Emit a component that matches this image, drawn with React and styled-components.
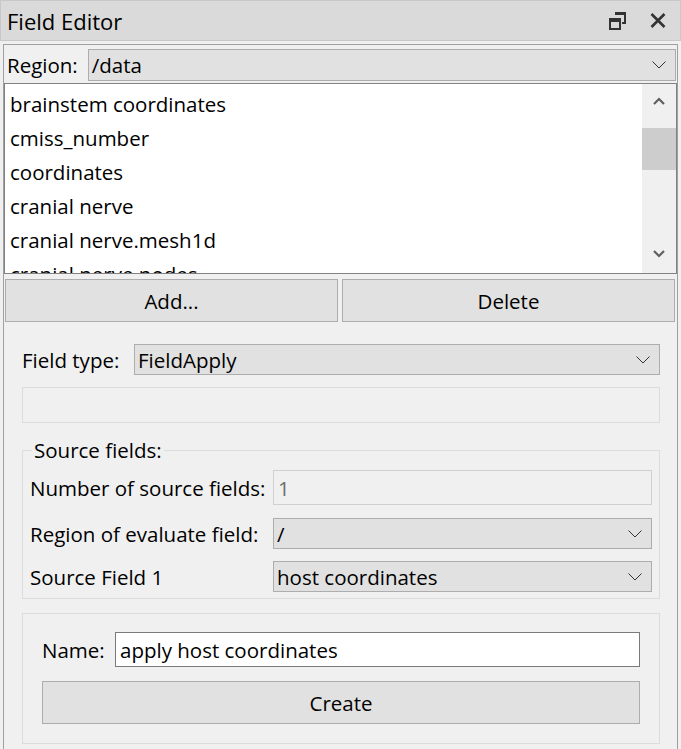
import React from 'react'
import styled, { createGlobalStyle } from 'styled-components'

const Global = createGlobalStyle`
  html, body {
    margin: 0;
    padding: 0;
    background: #f0f0f0;
    font-family: "Open Sans", "Liberation Sans", sans-serif;
    font-size: 20.5px;
    color: #000;
  }
  * { box-sizing: border-box; }
`

const TitleBar = styled.div`
  height: 41px;
  background: #dadada;
  border: 1px solid #c8c8c8;
  display: flex;
  align-items: center;
  padding: 0 14px 0 6px;
`
const Title = styled.div`
  flex: 1;
  font-size: 22px;
`
const TitleButtons = styled.div`
  display: flex;
  align-items: center;
  gap: 24px;
`
const Panel = styled.div`
  margin: 3px 3px 0 3px;
  border: 1px solid #a0a0a0;
  border-bottom: none;
  min-height: calc(100vh - 44px);
  display: flex;
  flex-direction: column;
`
const RegionRow = styled.div`
  height: 38px;
  display: flex;
  align-items: center;
  padding: 2px 1px 0 3px;
  gap: 10px;
`
const Label = styled.span`
  white-space: nowrap;
  width: ${p => p.$w || 'auto'};
  flex-shrink: 0;
`
const Combo = styled.div`
  flex: 1;
  height: ${p => p.$h || 32}px;
  background: #e1e1e1;
  border: 1px solid #adadad;
  display: flex;
  align-items: center;
  padding: 0 9px 0 3px;
  justify-content: space-between;
`
const List = styled.div`
  height: 191px;
  border: 1px solid #828282;
  background: #fff;
  display: flex;
  overflow: hidden;
`
const Items = styled.div`
  flex: 1;
  padding: 3px 0 0 5px;
`
const Item = styled.div`
  height: 34px;
  line-height: 34px;
  white-space: nowrap;
`
const ScrollBar = styled.div`
  width: 34px;
  background: #f0f0f0;
  display: flex;
  flex-direction: column;
  align-items: center;
  padding: 13px 0 15px;
`
const Thumb = styled.div`
  width: 100%;
  height: 42px;
  background: #cdcdcd;
  margin-top: 23px;
`
const Spacer = styled.div`
  flex: 1;
`
const ButtonRow = styled.div`
  display: grid;
  grid-template-columns: 1fr 1fr;
  gap: 4px;
  margin: 5px 2px 0 1px;
`
const Button = styled.div`
  flex: 1;
  height: 43px;
  background: #e1e1e1;
  border: 1px solid #adadad;
  display: flex;
  align-items: center;
  justify-content: center;
`
const Body = styled.div`
  padding: 22px 17px 0 18px;
  display: flex;
  flex-direction: column;
`
const Row = styled.div`
  display: flex;
  align-items: center;
  margin-top: ${p => p.$mt || 0}px;
`
const Blank = styled.div`
  height: 36px;
  border: 1px solid #dcdcdc;
  margin-top: 12px;
`
const Group = styled.div`
  position: relative;
  border: 1px solid #dcdcdc;
  margin-top: ${p => p.$mt}px;
  padding: ${p => p.$pad};
  display: flex;
  flex-direction: column;
`
const Legend = styled.span`
  position: absolute;
  top: -14px;
  left: 9px;
  padding: 0 2px;
  background: #f0f0f0;
  line-height: 26px;
`
const LineEdit = styled.div`
  flex: 1;
  height: 35px;
  display: flex;
  align-items: center;
  padding: 0 4px;
  background: ${p => (p.$disabled ? '#f0f0f0' : '#fff')};
  border: 1px solid ${p => (p.$disabled ? '#d0d0d0' : '#7a7a7a')};
  color: ${p => (p.$disabled ? '#6d6d6d' : '#000')};
`

const Chevron = () => (
  <svg width="14" height="8" viewBox="0 0 14 8">
    <polyline points="0.5,0.5 7,7 13.5,0.5" fill="none" stroke="#333" strokeWidth="1" />
  </svg>
)

const Arrow = ({ up }) => (
  <svg width="12" height="8" viewBox="0 0 12 8">
    <polyline
      points={up ? '1,7 6,2 11,7' : '1,1 6,6 11,1'}
      fill="none"
      stroke="#606060"
      strokeWidth="2.2"
    />
  </svg>
)

const RestoreIcon = () => (
  <svg width="17" height="18" viewBox="0 0 17 18">
    <path d="M6 1h10v10h-3" fill="none" stroke="#333" strokeWidth="2" />
    <rect x="6" y="0" width="11" height="3" fill="#333" />
    <rect x="1" y="7" width="10" height="10" fill="#dadada" stroke="#333" strokeWidth="2" />
    <rect x="0" y="6" width="12" height="4" fill="#333" />
  </svg>
)

const CloseIcon = () => (
  <svg width="16" height="15" viewBox="0 0 16 15">
    <path d="M1.5 1L14.5 14M14.5 1L1.5 14" stroke="#333" strokeWidth="2.6" />
  </svg>
)

const fields = [
  'brainstem coordinates',
  'cmiss_number',
  'coordinates',
  'cranial nerve',
  'cranial nerve.mesh1d',
  'cranial nerve.nodes',
]

const App = () => {
  return (
    <>
      <Global />
      <TitleBar>
        <Title>Field Editor</Title>
        <TitleButtons>
          <RestoreIcon />
          <CloseIcon />
        </TitleButtons>
      </TitleBar>
      <Panel>
        <RegionRow>
          <Label>Region:</Label>
          <Combo>
            <span>/data</span>
            <Chevron />
          </Combo>
        </RegionRow>
        <List>
          <Items>
            {fields.map(f => (
              <Item key={f}>{f}</Item>
            ))}
          </Items>
          <ScrollBar>
            <Arrow up />
            <Thumb />
            <Spacer />
            <Arrow />
          </ScrollBar>
        </List>
        <ButtonRow>
          <Button>Add...</Button>
          <Button>Delete</Button>
        </ButtonRow>
        <Body>
          <Row>
            <Label $w="112px">Field type:</Label>
            <Combo $h={31}>
              <span>FieldApply</span>
              <Chevron />
            </Combo>
          </Row>
          <Blank />
          <Group $mt={27} $pad="19px 7px 6px 7px">
            <Legend>Source fields:</Legend>
            <Row>
              <Label $w="243px">Number of source fields:</Label>
              <LineEdit $disabled>1</LineEdit>
            </Row>
            <Row $mt={13}>
              <Label $w="243px">Region of evaluate field:</Label>
              <Combo $h={31}>
                <span>/</span>
                <Chevron />
              </Combo>
            </Row>
            <Row $mt={12}>
              <Label $w="243px">Source Field 1</Label>
              <Combo $h={31}>
                <span>host coordinates</span>
                <Chevron />
              </Combo>
            </Row>
          </Group>
          <Group $mt={14} $pad="18px 19px 19px 19px">
            <Row>
              <Label $w="73px">Name:</Label>
              <LineEdit>apply host coordinates</LineEdit>
            </Row>
            <Row $mt={14}>
              <Button>Create</Button>
            </Row>
          </Group>
        </Body>
      </Panel>
    </>
  )
}

export default App
